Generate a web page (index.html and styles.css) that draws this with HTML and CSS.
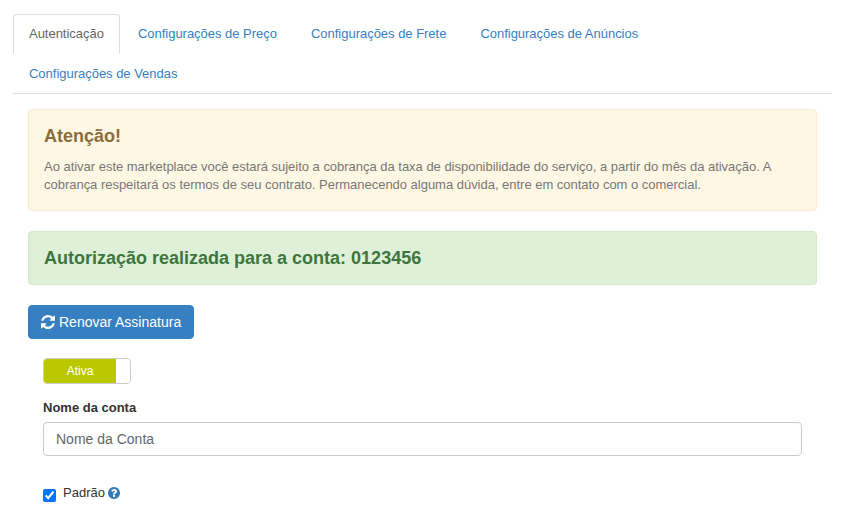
FILE: index.html
```html
<!DOCTYPE html>
<html lang="pt">
<head>
<meta charset="utf-8">
<title>Autenticação</title>
<link rel="stylesheet" href="styles.css">
</head>
<body>
<ul class="tabs">
  <li class="tab active"><a href="#">Autenticação</a></li>
  <li class="tab"><a href="#">Configurações de Preço</a></li>
  <li class="tab"><a href="#">Configurações de Frete</a></li>
  <li class="tab"><a href="#">Configurações de Anúncios</a></li>
  <li class="tab"><a href="#">Configurações de Vendas</a></li>
</ul>
<main class="content">
  <section class="alert alert-warning">
    <h4 class="alert-title">Atenção!</h4>
    <p class="alert-text">Ao ativar este marketplace você estará sujeito a cobrança da taxa de disponibilidade do serviço, a partir do mês da ativação. A cobrança respeitará os termos de seu contrato. Permanecendo alguma dúvida, entre em contato com o comercial.</p>
  </section>
  <section class="alert alert-success">
    <h4 class="success-title">Autorização realizada para a conta: 0123456</h4>
  </section>
  <button class="btn" type="button">
    <svg class="btn-icon" viewBox="0 0 1536 1536" aria-hidden="true"><path fill="currentColor" d="M1511 928q0 5-1 7-64 268-268 434.500t-478 166.500q-146 0-282.500-55t-243.500-157l-129 129q-19 19-45 19t-45-19-19-45v-448q0-26 19-45t45-19h448q26 0 45 19t19 45-19 45l-137 137q71 66 161 102t187 36q134 0 250-65t186-179q11-17 53-117 8-23 30-23h192q13 0 22.500 9.500t9.500 22.500zM1536 128v448q0 26-19 45t-45 19h-448q-26 0-45-19t-19-45 19-45l138-138q-148-137-349-137-134 0-250 65t-186 179q-11 17-53 117-8 23-30 23h-199q-13 0-22.500-9.500t-9.500-22.500v-7q65-268 270-434.500t480-166.500q146 0 284 55.500t245 156.500l130-129q19-19 45-19t45 19 19 45z"/></svg>
    Renovar Assinatura
  </button>
  <div class="form">
    <div class="switch"><span class="switch-on">Ativa</span><span class="switch-off"></span></div>
    <label class="field-label" for="nome">Nome da conta</label>
    <input class="input" id="nome" type="text" placeholder="Nome da Conta">
    <label class="check">
      <input class="check-box" type="checkbox" checked>
      <span>Padrão</span>
      <svg class="help" viewBox="0 0 1536 1536" aria-hidden="true"><path fill="currentColor" d="M896 1248v-192q0-14-9-23t-23-9h-192q-14 0-23 9t-9 23v192q0 14 9 23t23 9h192q14 0 23-9t9-23zM1152 576q0-88-55.500-163t-138.500-116-170-41q-243 0-371 213-15 24 8 42l132 100q7 6 19 6 16 0 25-12 53-68 86-92 34-24 86-24 48 0 85.500 26t37.500 59q0 38-20 61t-68 45q-63 28-115.500 86.500t-52.500 125.500v36q0 14 9 23t23 9h192q14 0 23-9t9-23q0-19 21.500-49.500t54.500-49.500q32-18 49-28.500t46-35 44.500-48 28-60.500 12.500-81zM1536 768q0 209-103 385.500t-279.500 279.500-385.500 103-385.500-103-279.500-279.500-103-385.500 103-385.500 279.500-279.500 385.500-103 385.500 103 279.500 279.500 103 385.500z"/></svg>
    </label>
  </div>
</main>
</body>
</html>
```
FILE: styles.css
```css
* { box-sizing: border-box; }
html, body { margin: 0; padding: 0; }
body {
  background: #fff;
  color: #333;
  font-family: "Liberation Sans", Arial, sans-serif;
  font-size: 13px;
  line-height: 20px;
  height: 509px;
  overflow: hidden;
  padding: 14px 13px 0;
}
.tabs {
  list-style: none;
  margin: 0;
  padding: 0;
  display: flex;
  flex-wrap: wrap;
  border-bottom: 1px solid #ddd;
  height: 80px;
  align-content: flex-start;
}
.tab { height: 40px; margin-right: 2px; }
.tab a {
  display: block;
  height: 40px;
  padding: 9px 15px 0;
  border: 1px solid transparent;
  color: #3680c2;
  letter-spacing: -0.02px;
  text-decoration: none;
  white-space: nowrap;
}
.tab.active a {
  color: #666;
  border-color: #ddd;
  border-bottom-color: #fff;
  border-radius: 4px 4px 0 0;
}
.content { padding: 15px 15px 0; }
.alert {
  border: 1px solid;
  border-radius: 4px;
  padding: 15px;
}
.alert-warning {
  background: #fef7e3;
  border-color: #faebcc;
  color: #8a6d3b;
  height: 102px;
  margin-bottom: 20px;
}
.alert-title {
  margin: 1px 0 12px;
  font-size: 18px;
  line-height: 20px;
  font-weight: bold;
}
.alert-text {
  margin: 0;
  color: #777;
  letter-spacing: -0.02px;
  line-height: 18px;
}
.alert-success {
  background: #dff0d8;
  border-color: #d6e9c6;
  color: #3c763d;
  height: 54px;
  margin-bottom: 20px;
}
.success-title {
  margin: 0;
  font-size: 18px;
  line-height: 22px;
  font-weight: bold;
}
.btn {
  display: flex;
  align-items: center;
  gap: 4px;
  height: 34px;
  padding: 0 12px;
  background: #3680c2;
  border: 1px solid #3680c2;
  border-radius: 4px;
  color: #fff;
  font: 14px/20px "Liberation Sans", Arial, sans-serif;
}
.btn-icon { width: 14px; height: 14px; }
.form { padding: 19px 15px 0; }
.switch {
  display: flex;
  width: 88px;
  height: 26px;
  border: 1px solid #ccc;
  border-radius: 4px;
  overflow: hidden;
}
.switch-on {
  width: 72px;
  background: #bbc800;
  color: #fff;
  font-size: 12px;
  text-align: center;
  line-height: 24px;
}
.switch-off { flex: 1; background: #fff; }
.field-label {
  display: block;
  margin: 14px 0 4px;
  font-weight: bold;
}
.input {
  display: block;
  width: 759px;
  height: 34px;
  padding: 6px 12px;
  border: 1px solid #ccc;
  border-radius: 4px;
  font: 14px/20px "Liberation Sans", Arial, sans-serif;
  color: #555;
}
.input::placeholder { color: #666; opacity: 1; }
.check {
  display: flex;
  align-items: center;
  gap: 7px;
  margin-top: 27px;
}
.check-box { margin: 5px 0 0; width: 13px; height: 13px; accent-color: #0075ff; }
.help { width: 12px; height: 12px; margin-left: -4px; color: #337ab7; }
```
